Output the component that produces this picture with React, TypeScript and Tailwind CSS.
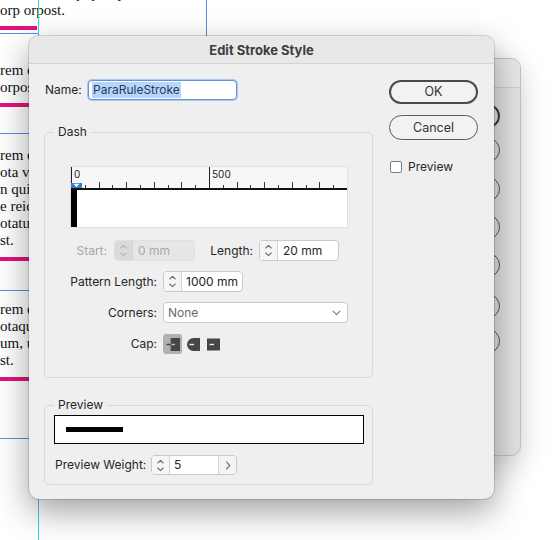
import React from "react";

const UI = "font-['Inter',sans-serif]";

function Stepper({ disabled }: { disabled?: boolean }) {
  const c = disabled ? "#b8b8b8" : "#6c6c6c";
  return (
    <div
      className={
        disabled
          ? "flex w-[18px] shrink-0 items-center justify-center border-r border-[#d4d4d4] bg-[#dadada]"
          : "flex w-[18px] shrink-0 items-center justify-center border-r border-[#d2d2d2] bg-[#f6f6f6]"
      }
    >
      <svg width="9" height="15" viewBox="0 0 9 15" fill="none" stroke={c} strokeWidth="1.1" strokeLinecap="round" strokeLinejoin="round">
        <path d="M1.8 5 4.5 2.3 7.2 5" />
        <path d="M1.8 10 4.5 12.7 7.2 10" />
      </svg>
    </div>
  );
}

function Label({ text, className }: { text: string; className: string }) {
  return <div className={`flex shrink-0 justify-end whitespace-nowrap ${className}`}>{text}</div>;
}

function CapButt() {
  return (
    <svg width="14" height="15" viewBox="0 0 14 15">
      <rect x="5" y="1" width="9" height="13" fill="#464646" />
      <rect x="0.5" y="6.8" width="5" height="1.4" fill="#464646" />
      <rect x="5" y="6.8" width="4" height="1.4" fill="#bdbdbd" />
      <rect x="4.5" y="1" width="1" height="13" fill="#5a5a5a" />
    </svg>
  );
}

function CapRound() {
  return (
    <svg width="14" height="15" viewBox="0 0 14 15">
      <path d="M7.5 1 H14 V14 H7.5 A6.5 6.5 0 0 1 7.5 1 Z" fill="#464646" />
      <rect x="3.5" y="6.8" width="4.5" height="1.4" fill="#f0f0f0" />
    </svg>
  );
}

function CapSquare() {
  return (
    <svg width="14" height="15" viewBox="0 0 14 15">
      <rect x="1" y="1.5" width="13" height="12" fill="#464646" />
      <rect x="3.5" y="6.8" width="4.5" height="1.4" fill="#f0f0f0" />
    </svg>
  );
}

/* Dash ruler: 0..1000 units over 277px, ticks every 50 units */
function Ruler() {
  const ticks = Array.from({ length: 19 }, (_, i) => i + 1).filter((i) => i !== 10);
  return (
    <div className="flex h-[62px] w-[278px] flex-col border border-[#e0e0e0] bg-white">
      <div className="relative h-[21px] bg-[#f7f7f7]">
        <svg className="absolute inset-0" width="276" height="21" viewBox="0 0 276 21">
          <rect x="0" y="0" width="1" height="21" fill="#222" />
          <rect x="138" y="0" width="1" height="21" fill="#222" />
          {ticks.map((i) => {
            const x = Math.round(i * 13.8);
            const h = i % 2 === 0 ? 6 : 3;
            return <rect key={i} x={x} y={21 - h} width="1" height={h} fill="#333" />;
          })}
          <rect x="0" y="16" width="11" height="6" fill="#3a7ad6" />
          <path d="M2.5 16.8 H8.5 L5.5 20.2 Z" fill="#fff" />
        </svg>
        <span className="absolute left-[3px] top-[1px] text-[10px] leading-[12px] text-[#222]">0</span>
        <span className="absolute left-[141px] top-[1px] text-[10px] leading-[12px] text-[#222]">500</span>
      </div>
      <div className="h-[2px] bg-[#111]" />
      <div className="flex flex-1">
        <div className="w-[6px] bg-black" />
      </div>
    </div>
  );
}

function StrokeDialog() {
  return (
    <div
      className={`absolute left-[29px] top-[36px] flex h-[463px] w-[465px] flex-col overflow-hidden rounded-[10px] bg-[#efefef] text-[12px] leading-[16px] text-[#262626] shadow-[0_12px_34px_rgba(0,0,0,0.38),0_0_0_1px_rgba(0,0,0,0.14)] ${UI}`}
    >
      <div className="flex h-[28px] shrink-0 items-center justify-center border-b border-[#d3d3d3] bg-[#e8e8e8] text-[13px] font-bold text-[#3d3d3d]">
        Edit Stroke Style
      </div>

      <div className="flex pl-[15px] pt-[16px]">
        {/* left column */}
        <div className="flex w-[329px] flex-col">
          <div className="flex h-[20px] items-center">
            <div className="w-[44px] pl-[1px]">Name:</div>
            <div className="flex h-[20px] w-[149px] items-center rounded-[4px] border border-[#5f94dc] bg-white px-[3px] shadow-[0_0_0_1px_#a9c8f0]">
              <span className="bg-[#b6d5fc] px-[1px] text-[#2b3a52]">ParaRuleStroke</span>
            </div>
          </div>

          <fieldset className="mt-[24px] rounded-[5px] border border-[#d9d9d9]">
            <legend className="ml-[9px] px-[4px] leading-[16px]">Dash</legend>
            <div className="flex flex-col pb-[23px] pl-[25px] pt-[26px]">
              <Ruler />

              <div className="mt-[12px] flex h-[21px] items-center">
                <Label text="Start:" className="w-[37px] text-[#a8a8a8]" />
                <div className="ml-[7px] flex h-[21px] w-[81px] overflow-hidden rounded-[4px] border border-[#e0e0e0] bg-[#e6e6e6]">
                  <Stepper disabled />
                  <div className="flex items-center pl-[5px] text-[#a9a9a9]">0 mm</div>
                </div>
                <Label text="Length:" className="w-[58px]" />
                <div className="ml-[6px] flex h-[21px] w-[80px] overflow-hidden rounded-[4px] border border-[#c9c9c9] bg-white">
                  <Stepper />
                  <div className="flex items-center pl-[5px]">20 mm</div>
                </div>
              </div>

              <div className="mt-[10px] flex h-[21px] items-center">
                <Label text="Pattern Length:" className="w-[87px]" />
                <div className="ml-[6px] flex h-[21px] w-[80px] overflow-hidden rounded-[4px] border border-[#c9c9c9] bg-white">
                  <Stepper />
                  <div className="flex items-center whitespace-nowrap pl-[4px]">1000 mm</div>
                </div>
              </div>

              <div className="mt-[10px] flex h-[21px] items-center">
                <Label text="Corners:" className="w-[87px]" />
                <div className="ml-[6px] flex h-[21px] w-[185px] items-center justify-between rounded-[4px] border border-[#c9c9c9] bg-white pl-[4px] pr-[6px] text-[#6b6b6b]">
                  <span>None</span>
                  <svg width="9" height="6" viewBox="0 0 9 6" fill="none" stroke="#777" strokeWidth="1.1" strokeLinecap="round" strokeLinejoin="round">
                    <path d="M1 1.2 4.5 4.7 8 1.2" />
                  </svg>
                </div>
              </div>

              <div className="mt-[11px] flex h-[20px] items-center">
                <Label text="Cap:" className="w-[87px]" />
                <div className="ml-[6px] flex gap-[1px]">
                  <div className="flex h-[20px] w-[19px] items-center justify-center rounded-[3px] bg-[#b1b1b1]">
                    <CapButt />
                  </div>
                  <div className="flex h-[20px] w-[19px] items-center justify-center">
                    <CapRound />
                  </div>
                  <div className="flex h-[20px] w-[19px] items-center justify-center">
                    <CapSquare />
                  </div>
                </div>
              </div>
            </div>
          </fieldset>

          <fieldset className="mt-[19px] rounded-[5px] border border-[#d9d9d9]">
            <legend className="ml-[9px] px-[4px] leading-[16px]">Preview</legend>
            <div className="flex flex-col pb-[9px] pl-[9px] pt-[2px]">
              <div className="flex h-[29px] w-[310px] items-center border-[1.5px] border-black bg-white pl-[11px]">
                <div className="h-[5px] w-[57px] bg-black" />
              </div>
              <div className="mt-[11px] flex h-[20px] items-center">
                <div className="w-[97px] whitespace-nowrap pl-[1px]">Preview Weight:</div>
                <div className="flex h-[20px] w-[86px] overflow-hidden rounded-[4px] border border-[#c9c9c9] bg-white">
                  <Stepper />
                  <div className="flex flex-1 items-center pl-[4px]">5</div>
                  <div className="flex w-[18px] items-center justify-center border-l border-[#d2d2d2] bg-[#f4f4f4]">
                    <svg width="6" height="9" viewBox="0 0 6 9" fill="none" stroke="#777" strokeWidth="1.1" strokeLinecap="round" strokeLinejoin="round">
                      <path d="M1.5 1 4.8 4.5 1.5 8" />
                    </svg>
                  </div>
                </div>
              </div>
            </div>
          </fieldset>
        </div>

        {/* right column */}
        <div className="ml-[16px] flex w-[89px] flex-col">
          <div className="flex h-[24px] items-center justify-center rounded-full border-2 border-[#4a4a4a] bg-[#f2f2f2] text-[12.5px] text-[#333]">
            OK
          </div>
          <div className="mt-[11px] flex h-[25px] items-center justify-center rounded-full border border-[#5c5c5c] bg-[#f2f2f2] text-[12.5px] text-[#333]">
            Cancel
          </div>
          <div className="mt-[19px] flex items-center pl-[1px]">
            <div className="h-[12px] w-[12px] rounded-[2px] border border-[#7c7c7c] bg-white" />
            <span className="ml-[6px]">Preview</span>
          </div>
        </div>
      </div>
    </div>
  );
}

/* Window behind the dialog; only its right edge shows */
function BackPanel() {
  const gaps = ["mt-[16px]", "mt-[10px]", "mt-[15px]", "mt-[14px]", "mt-[14px]", "mt-[17px]", "mt-[11px]"];
  return (
    <div className="absolute left-[300px] top-[58px] flex h-[398px] w-[221px] flex-col overflow-hidden rounded-[10px] border border-[#c2c2c2] bg-[#e3e3e3] shadow-[0_10px_30px_rgba(0,0,0,0.18)]">
      <div className="h-[29px] shrink-0 border-b border-[#cfcfcf] bg-[#e8e8e8]" />
      <div className="flex flex-col pl-[119px]">
        {gaps.map((g, i) => (
          <div
            key={i}
            className={`${g} h-[24px] w-[80px] rounded-full ${i === 0 ? "border-2 border-[#3f3f3f]" : "border border-[#555]"}`}
          />
        ))}
      </div>
    </div>
  );
}

function Document() {
  return (
    <div className="absolute inset-0 font-['Liberation_Serif',serif] text-[15px] leading-[17px] text-[#111]">
      <div className="absolute left-[38px] top-0 h-[540px] w-px bg-[#39cfdb]" />
      <div className="absolute left-[206px] top-0 h-[60px] w-px bg-[#5a8de6]" />
      <div className="-mt-[15px] flex flex-col whitespace-nowrap">
        <p>aute eatem, quipit apiti</p>
        <p>orp orpost.</p>
        <div className="mt-[7px] h-[4px] w-[37px] bg-[#e2127e]" />
        <div className="mt-[3px] h-px w-[38px] bg-[#5a8de6]" />

        <p className="mt-[28px]">rem et quo blaboris</p>
        <p>orpost.</p>
        <div className="mt-[7px] h-[4px] w-[200px] bg-[#e2127e]" />
        <div className="mt-[26px] h-px w-[200px] bg-[#5a8de6]" />

        <p className="mt-[13px]">rem eos et ut aut</p>
        <p>ota volupta</p>
        <p>n quis aut lam</p>
        <p>e reiciatur</p>
        <p>otatur simus</p>
        <p>st.</p>
        <div className="mt-[8px] h-[4px] w-[200px] bg-[#e2127e]" />
        <div className="mt-[29px] h-px w-[200px] bg-[#5a8de6]" />

        <p className="mt-[10px]">rem eum et aut</p>
        <p>otaquae nis</p>
        <p>um, ut que</p>
        <p>st.</p>
        <div className="mt-[8px] h-[4px] w-[200px] bg-[#e2127e]" />
        <div className="mt-[57px] h-px w-[200px] bg-[#5a8de6]" />
      </div>
    </div>
  );
}

export default function App() {
  return (
    <div className="relative h-[540px] w-[552px] overflow-hidden bg-white">
      <Document />
      <BackPanel />
      <StrokeDialog />
    </div>
  );
}
